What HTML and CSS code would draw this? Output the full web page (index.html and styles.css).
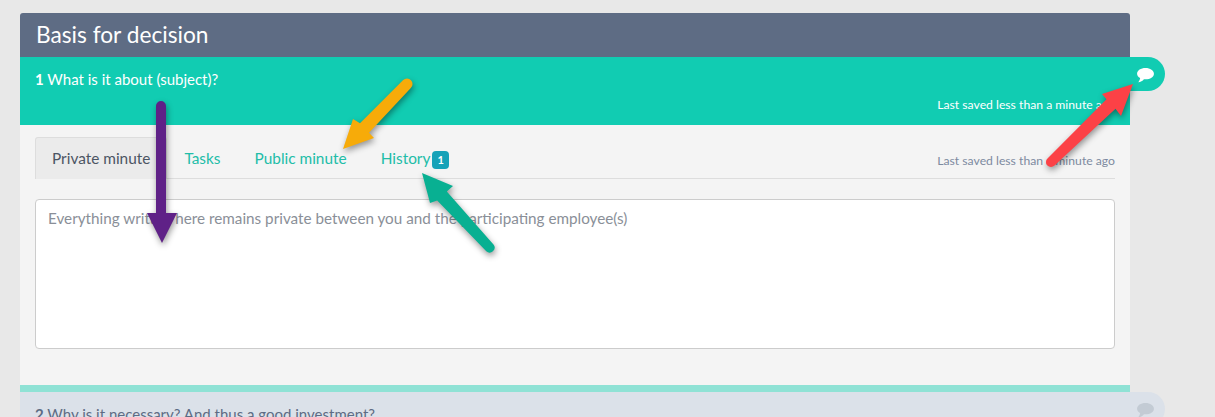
FILE: index.html
```html
<!DOCTYPE html>
<html lang="en">
<head>
    <meta charset="UTF-8">
    <meta name="viewport" content="width=device-width, initial-scale=1.0">
    <title>Basis for decision</title>
    <link rel="stylesheet" href="styles.css">
</head>
<body>
    <main class="panel">
        <h1 class="panel-title">Basis for decision</h1>

        <section class="question open">
            <p class="question-title"><b>1</b> What is it about (subject)?</p>
            <p class="saved">Last saved less than a minute ago</p>
            <span class="comment-pill">
                <svg class="bubble" viewBox="0 0 18 16"><path d="M9 0C4 0 0 2.6 0 6c0 2 1.300 3.600 3.300 4.600C3.100 12.300 2.200 14 1.200 15.200 3.800 15 6 13.700 7.300 11.900c.6.100 1.100.1 1.700.1 5 0 9-2.700 9-6S14 0 9 0z"/></svg>
            </span>
        </section>

        <section class="question-body">
            <div class="tabs">
                <a class="tab active">Private minute</a>
                <a class="tab">Tasks</a>
                <a class="tab">Public minute</a>
                <a class="tab history">History<span class="badge">1</span></a>
                <span class="tabs-saved">Last saved less than a minute ago</span>
            </div>
            <textarea class="note" placeholder="Everything written here remains private between you and the participating employee(s)"></textarea>
        </section>
        <div class="strip"></div>

        <section class="question closed">
            <p class="question-title"><b>2</b> Why is it necessary? And thus a good investment?</p>
            <span class="comment-pill">
                <svg class="bubble" viewBox="0 0 18 16"><path d="M9 0C4 0 0 2.6 0 6c0 2 1.300 3.600 3.300 4.600C3.100 12.300 2.200 14 1.200 15.200 3.800 15 6 13.700 7.300 11.900c.6.100 1.100.1 1.700.1 5 0 9-2.700 9-6S14 0 9 0z"/></svg>
            </span>
        </section>
    </main>

    <!-- annotation arrows drawn over the screenshot -->
    <svg class="arrows" width="1215" height="417" viewBox="0 0 1215 417">
        <path class="arrow purple" d="M156 106A5 5 0 0 1 166 106L166 213L177 213L162 243L147 213L156 213Z"/>
        <path class="arrow orange" d="M403.200 80L360 123.300L353 119L343 149L374 138L369 132.700L410.800 88A5.500 5.500 0 0 0 403.200 80Z"/>
        <path class="arrow green" d="M486.300 251.300L437.200 200.400L430 203L422 173L453 186L446.800 191.600L493.700 244.700A5 5 0 0 1 486.300 251.300Z"/>
        <path class="arrow red" d="M1047.500 158.400L1106.500 99.300L1102 94L1133 84L1121 116L1115.500 108.700L1054.500 165.600A5 5 0 0 1 1047.500 158.400Z"/>
    </svg>
</body>
</html>
```

FILE: styles.css
```css
* {
    margin: 0;
    padding: 0;
    box-sizing: border-box;
    font-family: "Lato", "Noto Sans", sans-serif;
}

html, body {
    height: 417px;
    overflow: hidden;
}

body {
    background-color: #e8e8e8;
    padding: 13px 0 0 20px;
}

.panel {
    width: 1110px;
}

.panel-title {
    height: 44px;
    padding: 7px 16px 0;
    background-color: #5e6c84;
    border-radius: 3px 3px 0 0;
    color: #fff;
    font-size: 22.7px;
    font-weight: 400;
    line-height: 30px;
}

.question {
    position: relative;
    padding: 12px 15px 0;
}

.question.open {
    height: 68px;
    background-color: #11ccb2;
    color: #fff;
}

.question.closed {
    height: 60px;
    background-color: #dbe1e9;
    color: #5e6c84;
}

.question-title {
    font-size: 15px;
    line-height: 20px;
}

.saved {
    position: absolute;
    right: 15px;
    top: 40px;
    font-size: 12.2px;
    line-height: 16px;
}

.comment-pill {
    position: absolute;
    top: 0;
    right: -35px;
    width: 60px;
    height: 34px;
    border-radius: 0 17px 17px 0;
    background-color: inherit;
}

.bubble {
    position: absolute;
    top: 11px;
    right: 11px;
    width: 17px;
    height: 15px;
    fill: #fff;
}

.closed .bubble {
    fill: #c3cbd4;
}

.question-body {
    height: 260px;
    padding: 12px 15px 0;
    background-color: #f4f4f4;
}

.tabs {
    display: flex;
    align-items: flex-start;
    height: 42px;
    border-bottom: 1px solid #dddddd;
}

.tab {
    padding: 1px 17px 0;
    color: #22bda8;
    font-size: 15.4px;
    line-height: 41px;
}

.tab.active {
    height: 42px;
    background-color: #ebebeb;
    border: 1px solid #dddddd;
    border-bottom: none;
    border-radius: 3px 3px 0 0;
    color: #4b5563;
    padding: 0 16px;
}

.badge {
    display: inline-block;
    margin-left: 2px;
    padding: 0 5px;
    background-color: #17a2b8;
    border-radius: 4px;
    color: #fff;
    font-size: 11px;
    font-weight: 700;
    line-height: 18px;
}

.tabs-saved {
    margin-left: auto;
    color: #7d8aa0;
    font-size: 12.2px;
    line-height: 47px;
}

.note {
    display: block;
    width: 100%;
    height: 150px;
    margin-top: 20px;
    padding: 8px 12px;
    background-color: #fff;
    border: 1px solid #cccccc;
    border-radius: 4px;
    font-size: 15.26px;
    line-height: 20px;
    resize: none;
}

.note::placeholder {
    color: #8a8f98;
    opacity: 1;
}

.strip {
    height: 7px;
    background-color: #8fe2d5;
}

.arrows {
    position: absolute;
    top: 0;
    left: 0;
}

.arrow {
    filter: drop-shadow(1px 3px 3px rgba(0, 0, 0, 0.4));
}

.purple { fill: #5f2187; }
.orange { fill: #f7ab09; }
.green { fill: #08b092; }
.red { fill: #fc4146; }
```
